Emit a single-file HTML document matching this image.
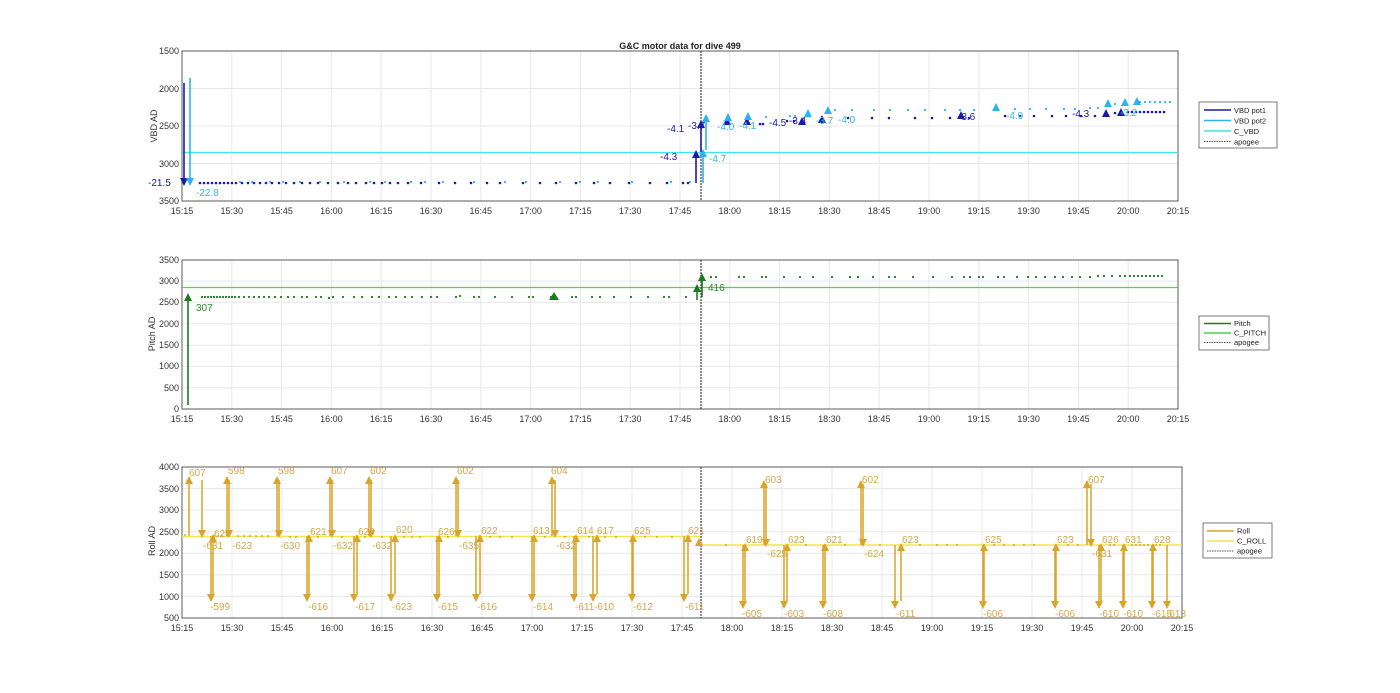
<!DOCTYPE html>
<html><head><meta charset="utf-8"><style>
html,body{margin:0;padding:0;background:#fff;}
svg{display:block;font-family:"Liberation Sans",Arial,sans-serif;}
.t{font-size:9px;fill:#333;}
.g{stroke:#e8e8e8;stroke-width:1;fill:none;}
.b{stroke:#333;stroke-width:0.8;fill:none;}
.rl{font-size:10px;fill:#d4a848;}
</style></head><body>
<svg width="1400" height="693" viewBox="0 0 1400 693">
<text x="680" y="49" text-anchor="middle" style="font-size:9px;font-weight:bold;fill:#222">G&amp;C motor data for dive 499</text>

<!-- ============ VBD AXES ============ -->
<path class="g" d="M231.8 51V201M281.6 51V201M331.4 51V201M381.2 51V201M431 51V201M480.8 51V201M530.6 51V201M580.4 51V201M630.2 51V201M680 51V201M729.8 51V201M779.6 51V201M829.4 51V201M879.2 51V201M929 51V201M978.8 51V201M1028.6 51V201M1078.4 51V201M1128.2 51V201M182 88.5H1178M182 126H1178M182 163.5H1178"/>
<rect class="b" x="182" y="51" width="996" height="150"/>
<g class="t" text-anchor="end"><text x="179" y="54">1500</text><text x="179" y="92">2000</text><text x="179" y="129">2500</text><text x="179" y="167">3000</text><text x="179" y="204">3500</text></g>
<text class="t" transform="translate(157,126) rotate(-90)" text-anchor="middle">VBD AD</text>
<g class="t" text-anchor="middle"><text x="182" y="214">15:15</text><text x="231.8" y="214">15:30</text><text x="281.6" y="214">15:45</text><text x="331.4" y="214">16:00</text><text x="381.2" y="214">16:15</text><text x="431" y="214">16:30</text><text x="480.8" y="214">16:45</text><text x="530.6" y="214">17:00</text><text x="580.4" y="214">17:15</text><text x="630.2" y="214">17:30</text><text x="680" y="214">17:45</text><text x="729.8" y="214">18:00</text><text x="779.6" y="214">18:15</text><text x="829.4" y="214">18:30</text><text x="879.2" y="214">18:45</text><text x="929" y="214">19:00</text><text x="978.8" y="214">19:15</text><text x="1028.6" y="214">19:30</text><text x="1078.4" y="214">19:45</text><text x="1128.2" y="214">20:00</text><text x="1178" y="214">20:15</text></g>
<line x1="182" y1="152.5" x2="1178" y2="152.5" stroke="#3fe3e8" stroke-width="1.2"/>
<line x1="701" y1="51" x2="701" y2="201" stroke="#444" stroke-width="1.2" stroke-dasharray="2,1"/>
<!-- dots -->
<path stroke="#1a1aa8" stroke-width="2.6" stroke-linecap="round" d="M200 183h0M204 183h0M208 183h0M212 183h0M216 183h0M220 183h0M224 183h0M228 183h0M232 183h0M236 183h0M242 183h0M248 183h0M254 183h0M260 183h0M266 183h0M272 183h0M279 183h0M286 183h0M294 183h0M302 183h0M310 183h0M318 183h0M328 183h0M338 183h0M348 183h0M356 183h0M366 183h0M374 183h0M382 183h0M390 183h0M398 183h0M408 183h0M421 183h0M439 183h0M455 183h0M471 183h0M487 183h0M500 183h0M523 183h0M540 183h0M556 183h0M576 183h0M594 183h0M610 183h0M629 183h0M650 183h0M667 183h0M683 183h0M688 183h0M760 124h0M763 124h0M787 121h0M794 121h0M848 118h0M872 118h0M889 118h0M915 118h0M932 118h0M950 118h0M969 118h0M1005 116h0M1020 116h0M1034 116h0M1052 116h0M1066 116h0M1081 116h0M1095 116h0M1115 113h0M1128 112h0M1132 112h0M1136 112h0M1140 112h0M1144 112h0M1148 112h0M1152 112h0M1156 112h0M1160 112h0M1164 112h0"/>
<path stroke="#2fb0f0" stroke-width="2.2" stroke-linecap="round" d="M240 182h0M252 182h0M270 182h0M283 182h0M300 182h0M320 182h0M344 182h0M370 182h0M385 182h0M411 182h0M425 182h0M443 182h0M474 182h0M505 182h0M526 182h0M560 182h0M580 182h0M598 182h0M632 182h0M671 182h0M690 182h0M766 117h0M790 116h0M795 116h0M835 110h0M852 110h0M874 110h0M890 110h0M908 110h0M925 110h0M945 110h0M960 110h0M974 110h0M1015 109h0M1030 109h0M1046 109h0M1064 109h0M1075 109h0M1090 108h0M1098 108h0M1115 104h0M1140 102h0M1145 102h0M1150 102h0M1155 102h0M1160 102h0M1165 102h0M1170 102h0"/>
<!-- VBD arrows dark -->
<g stroke="#1a1aa8" stroke-width="1.6" fill="#1a1aa8">
<line x1="184" y1="83" x2="184" y2="180"/><polygon stroke="none" points="180,178 188,178 184,186"/>
<line x1="696" y1="183" x2="696" y2="156"/><polygon stroke="none" points="692,158 700,158 696,150"/>
<line x1="701" y1="152" x2="701" y2="126"/><polygon stroke="none" points="697,128 705,128 701,120"/>
<polygon stroke="none" points="723,125 731,125 727,117"/><polygon stroke="none" points="743,125 751,125 747,117"/>
<polygon stroke="none" points="798,125 806,125 802,117"/><polygon stroke="none" points="818,123 826,123 822,115"/>
<polygon stroke="none" points="957,119 965,119 961,111"/><polygon stroke="none" points="1102,117 1110,117 1106,109"/>
<polygon stroke="none" points="1117,116 1125,116 1121,108"/>
</g>
<g stroke="#2fb0f0" stroke-width="1.6" fill="#2fb0f0">
<line x1="190" y1="78" x2="190" y2="180"/><polygon stroke="none" points="186,178 194,178 190,186"/>
<line x1="703" y1="183" x2="703" y2="155"/><polygon stroke="none" points="699,157 707,157 703,149"/>
<line x1="706" y1="150" x2="706" y2="120"/><polygon stroke="none" points="702,122 710,122 706,114"/>
<polygon stroke="none" points="724,121 732,121 728,113"/><polygon stroke="none" points="744,120 752,120 748,112"/>
<polygon stroke="none" points="804,117 812,117 808,109"/><polygon stroke="none" points="824,114 832,114 828,106"/>
<polygon stroke="none" points="992,111 1000,111 996,103"/><polygon stroke="none" points="1104,107 1112,107 1108,99"/>
<polygon stroke="none" points="1121,106 1129,106 1125,98"/><polygon stroke="none" points="1133,105 1141,105 1137,97"/>
</g>
<g style="font-size:10px;fill:#1a1aa8"><text x="148" y="186">-21.5</text><text x="660" y="160">-4.3</text><text x="667" y="132">-4.1</text><text x="688" y="129">-3.7</text><text x="769" y="126">-4.5</text><text x="789" y="124">-3.4</text><text x="958" y="120">-3.6</text><text x="1072" y="117">-4.3</text></g>
<g style="font-size:10px;fill:#35b5f0"><text x="196" y="196">-22.8</text><text x="709" y="162">-4.7</text><text x="717" y="130">-4.0</text><text x="739" y="129">-4.1</text><text x="816" y="124">-3.7</text><text x="838" y="123">-4.0</text><text x="1006" y="119">-4.9</text><text x="1120" y="116">-3.2</text></g>
<!-- legend 1 -->
<rect x="1199" y="102" width="78" height="46" fill="#fff" stroke="#444" stroke-width="0.7"/>
<g stroke-width="1.5"><line x1="1204" y1="110" x2="1231" y2="110" stroke="#1a1aa8"/><line x1="1204" y1="120.5" x2="1231" y2="120.5" stroke="#2fb0f0"/><line x1="1204" y1="131" x2="1231" y2="131" stroke="#3fe3e8"/><line x1="1204" y1="141.5" x2="1231" y2="141.5" stroke="#555" stroke-width="1" stroke-dasharray="1.5,1"/></g>
<g style="font-size:7.5px;fill:#222"><text x="1234" y="113">VBD pot1</text><text x="1234" y="123.5">VBD pot2</text><text x="1234" y="134">C_VBD</text><text x="1234" y="144.5">apogee</text></g>

<!-- ============ PITCH AXES ============ -->
<path class="g" d="M231.8 260V409M281.6 260V409M331.4 260V409M381.2 260V409M431 260V409M480.8 260V409M530.6 260V409M580.4 260V409M630.2 260V409M680 260V409M729.8 260V409M779.6 260V409M829.4 260V409M879.2 260V409M929 260V409M978.8 260V409M1028.6 260V409M1078.4 260V409M1128.2 260V409M182 387.7H1178M182 366.4H1178M182 345.1H1178M182 323.7H1178M182 302.4H1178M182 281.1H1178"/>
<rect class="b" x="182" y="260" width="996" height="149"/>
<g class="t" text-anchor="end"><text x="179" y="263">3500</text><text x="179" y="284">3000</text><text x="179" y="305">2500</text><text x="179" y="327">2000</text><text x="179" y="348">1500</text><text x="179" y="369">1000</text><text x="179" y="391">500</text><text x="179" y="412">0</text></g>
<text class="t" transform="translate(155,334) rotate(-90)" text-anchor="middle">Pitch AD</text>
<g class="t" text-anchor="middle"><text x="182" y="422">15:15</text><text x="231.8" y="422">15:30</text><text x="281.6" y="422">15:45</text><text x="331.4" y="422">16:00</text><text x="381.2" y="422">16:15</text><text x="431" y="422">16:30</text><text x="480.8" y="422">16:45</text><text x="530.6" y="422">17:00</text><text x="580.4" y="422">17:15</text><text x="630.2" y="422">17:30</text><text x="680" y="422">17:45</text><text x="729.8" y="422">18:00</text><text x="779.6" y="422">18:15</text><text x="829.4" y="422">18:30</text><text x="879.2" y="422">18:45</text><text x="929" y="422">19:00</text><text x="978.8" y="422">19:15</text><text x="1028.6" y="422">19:30</text><text x="1078.4" y="422">19:45</text><text x="1128.2" y="422">20:00</text><text x="1178" y="422">20:15</text></g>
<line x1="182" y1="287.5" x2="1178" y2="287.5" stroke="#4cd44c" stroke-width="1.3"/>
<line x1="701" y1="260" x2="701" y2="409" stroke="#444" stroke-width="1.2" stroke-dasharray="2,1"/>
<path stroke="#1e7a1e" stroke-width="2.2" stroke-linecap="round" d="M202 297h0M205 297h0M208 297h0M211 297h0M214 297h0M217 297h0M220 297h0M223 297h0M226 297h0M229 297h0M232 297h0M235 297h0M239 297h0M244 297h0M249 297h0M254 297h0M259 297h0M264 297h0M269 297h0M275 297h0M281 297h0M288 297h0M294 297h0M302 297h0M307 297h0M316 297h0M321 297h0M329 298h0M333 297h0M343 297h0M354 297h0M362 297h0M372 297h0M379 297h0M389 297h0M396 297h0M405 297h0M412 297h0M422 297h0M431 297h0M437 297h0M456 297h0M460 296h0M474 297h0M479 297h0M495 297h0M512 297h0M529 297h0M533 297h0M551 297h0M572 297h0M576 297h0M592 297h0M600 297h0M614 297h0M631 297h0M648 297h0M664 297h0M669 297h0M686 297h0M711 277h0M716 277h0M739 277h0M744 277h0M762 277h0M766 277h0M784 277h0M800 277h0M813 277h0M832 277h0M850 277h0M858 277h0M873 277h0M889 277h0M895 277h0M913 277h0M933 277h0M952 277h0M964 277h0M970 277h0M979 277h0M983 277h0M998 277h0M1004 277h0M1017 277h0M1028 277h0M1036 277h0M1045 277h0M1055 277h0M1063 277h0M1072 277h0M1080 277h0M1090 277h0M1098 276h0M1104 276h0M1112 276h0M1120 276h0M1125 276h0M1130 276h0M1134 276h0M1138 276h0M1142 276h0M1146 276h0M1150 276h0M1154 276h0M1158 276h0M1162 276h0"/>
<g stroke="#1e7a1e" stroke-width="1.6" fill="#1e7a1e">
<line x1="188" y1="405" x2="188" y2="300"/><polygon stroke="none" points="184,301 192,301 188,293"/>
<polygon stroke="none" points="549,300 559,300 554,292"/>
<line x1="697" y1="300" x2="697" y2="291"/><polygon stroke="none" points="693,292 701,292 697,284"/>
<line x1="702" y1="297" x2="702" y2="280"/><polygon stroke="none" points="698,281 706,281 702,273"/>
</g>
<g style="font-size:10px;fill:#2a8a2a"><text x="196" y="311">307</text><text x="708" y="291">416</text></g>
<rect x="1199" y="316" width="70" height="34" fill="#fff" stroke="#444" stroke-width="0.7"/>
<g stroke-width="1.5"><line x1="1204" y1="323.5" x2="1231" y2="323.5" stroke="#1e7a1e"/><line x1="1204" y1="333" x2="1231" y2="333" stroke="#4cd44c"/><line x1="1204" y1="342.5" x2="1231" y2="342.5" stroke="#555" stroke-width="1" stroke-dasharray="1.5,1"/></g>
<g style="font-size:7.5px;fill:#222"><text x="1234" y="326">Pitch</text><text x="1234" y="335.5">C_PITCH</text><text x="1234" y="345">apogee</text></g>

<!-- ============ ROLL AXES ============ -->
<path class="g" d="M232 467V618M282 467V618M332 467V618M382 467V618M432 467V618M482 467V618M532 467V618M582 467V618M632 467V618M682 467V618M732 467V618M782 467V618M832 467V618M882 467V618M932 467V618M982 467V618M1032 467V618M1082 467V618M1132 467V618M182 596.4H1182M182 574.9H1182M182 553.3H1182M182 531.7H1182M182 510.1H1182M182 488.6H1182"/>
<rect class="b" x="182" y="467" width="1000" height="151"/>
<g class="t" text-anchor="end"><text x="179" y="470">4000</text><text x="179" y="492">3500</text><text x="179" y="513">3000</text><text x="179" y="535">2500</text><text x="179" y="556">2000</text><text x="179" y="578">1500</text><text x="179" y="600">1000</text><text x="179" y="621">500</text></g>
<text class="t" transform="translate(155,541) rotate(-90)" text-anchor="middle">Roll AD</text>
<g class="t" text-anchor="middle"><text x="182" y="631">15:15</text><text x="232" y="631">15:30</text><text x="282" y="631">15:45</text><text x="332" y="631">16:00</text><text x="382" y="631">16:15</text><text x="432" y="631">16:30</text><text x="482" y="631">16:45</text><text x="532" y="631">17:00</text><text x="582" y="631">17:15</text><text x="632" y="631">17:30</text><text x="682" y="631">17:45</text><text x="732" y="631">18:00</text><text x="782" y="631">18:15</text><text x="832" y="631">18:30</text><text x="882" y="631">18:45</text><text x="932" y="631">19:00</text><text x="982" y="631">19:15</text><text x="1032" y="631">19:30</text><text x="1082" y="631">19:45</text><text x="1132" y="631">20:00</text><text x="1182" y="631">20:15</text></g>
<line x1="182" y1="536.5" x2="701" y2="536.5" stroke="#f2e64a" stroke-width="1.4"/>
<line x1="701" y1="545" x2="1182" y2="545" stroke="#f2e64a" stroke-width="1.4"/>
<line x1="701" y1="467" x2="701" y2="618" stroke="#444" stroke-width="1.2" stroke-dasharray="2,1"/>
<path stroke="#b89a30" stroke-width="1.8" stroke-linecap="round" d="M185 535h0M214 536h0M218 536h0M222 536h0M238 536h0M244 536h0M250 536h0M256 536h0M262 536h0M268 536h0M290 537h0M296 537h0M318 537h0M342 537h0M365 537h0M382 537h0M404 537h0M412 537h0M420 537h0M448 537h0M490 537h0M500 537h0M512 537h0M545 537h0M565 537h0M589 537h0M605 537h0M616 537h0M645 537h0M657 537h0M672 537h0M726 545h0M806 545h0M845 545h0M880 545h0M920 545h0M937 545h0M947 545h0M957 545h0M994 545h0M1004 545h0M1014 545h0M1024 545h0M1034 545h0M1068 545h0M1078 545h0M1110 545h0M1114 545h0M1132 545h0M1136 545h0M1140 545h0M1144 545h0M1148 545h0M1156 545h0M1160 545h0"/>
<!-- roll arrows -->
<g stroke="#d9a428" stroke-width="1.5" fill="#d9a428">
<!-- pre apogee: ups to 480, downs to 600 -->
<path fill="none" d="M189 536V484M202 480V530M211 536V594M213 594V540M227 536V484M229 480V530M277 536V484M279 480V530M307 536V594M309 594V542M330 536V484M332 480V530M354 536V594M357 594V542M369 536V484M371 480V530M391 536V594M395 594V542M437 536V594M439 594V542M456 536V484M458 480V530M476 536V594M480 594V542M532 536V594M534 594V542M552 536V484M555 480V530M574 536V594M576 594V542M593 536V594M597 594V542M632 536V594M633 594V542M684 536V594M688 594V542M699 545V541"/>
<path stroke="none" d="M185 484h8l-4-8zM198 530h8l-4 8zM207 594h8l-4 8zM209 542h8l-4-8zM223 484h8l-4-8zM225 530h8l-4 8zM273 484h8l-4-8zM275 530h8l-4 8zM303 594h8l-4 8zM305 542h8l-4-8zM326 484h8l-4-8zM328 530h8l-4 8zM350 594h8l-4 8zM353 542h8l-4-8zM365 484h8l-4-8zM367 530h8l-4 8zM387 594h8l-4 8zM391 542h8l-4-8zM433 594h8l-4 8zM435 542h8l-4-8zM452 484h8l-4-8zM454 530h8l-4 8zM472 594h8l-4 8zM476 542h8l-4-8zM528 594h8l-4 8zM530 542h8l-4-8zM548 484h8l-4-8zM551 530h8l-4 8zM570 594h8l-4 8zM572 542h8l-4-8zM589 594h8l-4 8zM593 542h8l-4-8zM628 594h8l-4 8zM629 542h8l-4-8zM680 594h8l-4 8zM684 542h8l-4-8zM695 546h8l-4-8z"/>
<!-- post apogee: base 545 -->
<path fill="none" d="M743 545V601M745 601V551M764 545V488M766 484V539M784 545V601M787 601V551M823 545V601M825 601V551M861 545V488M863 484V539M895 545V601M901 601V551M983 545V601M984 601V551M1055 545V601M1056 601V551M1087 545V488M1091 484V539M1099 545V601M1101 601V551M1123 545V601M1124 601V551M1152 545V601M1153 601V551M1167 545V601"/>
<path stroke="none" d="M739 601h8l-4 8zM741 551h8l-4-8zM760 488h8l-4-8zM762 539h8l-4 8zM780 601h8l-4 8zM783 551h8l-4-8zM819 601h8l-4 8zM821 551h8l-4-8zM857 488h8l-4-8zM859 539h8l-4 8zM891 601h8l-4 8zM897 551h8l-4-8zM979 601h8l-4 8zM980 551h8l-4-8zM1051 601h8l-4 8zM1052 551h8l-4-8zM1083 488h8l-4-8zM1087 539h8l-4 8zM1095 601h8l-4 8zM1097 551h8l-4-8zM1119 601h8l-4 8zM1120 551h8l-4-8zM1148 601h8l-4 8zM1149 551h8l-4-8zM1163 601h8l-4 8z"/>
</g>
<g class="rl">
<text x="189" y="476">607</text><text x="203" y="549">-631</text><text x="210" y="610">-599</text><text x="214" y="537">620</text><text x="228" y="474">598</text><text x="232" y="549">-623</text><text x="278" y="474">598</text><text x="280" y="549">-630</text><text x="308" y="610">-616</text><text x="310" y="535">621</text><text x="331" y="474">607</text><text x="333" y="549">-632</text><text x="355" y="610">-617</text><text x="358" y="535">628</text><text x="370" y="474">602</text><text x="372" y="549">-632</text><text x="392" y="610">-623</text><text x="396" y="533">620</text><text x="438" y="610">-615</text><text x="438" y="535">626</text><text x="457" y="474">602</text><text x="459" y="549">-635</text><text x="477" y="610">-616</text><text x="481" y="534">622</text><text x="533" y="610">-614</text><text x="533" y="534">613</text><text x="551" y="474">604</text><text x="556" y="549">-632</text><text x="575" y="610">-611</text><text x="577" y="534">614</text><text x="594" y="610">-610</text><text x="597" y="534">617</text><text x="633" y="610">-612</text><text x="634" y="534">625</text><text x="685" y="610">-611</text><text x="688" y="534">621</text>
<text x="742" y="617">-605</text><text x="746" y="543">619</text><text x="765" y="483">603</text><text x="767" y="557">-625</text><text x="784" y="617">-603</text><text x="788" y="543">623</text><text x="823" y="617">-608</text><text x="826" y="543">621</text><text x="862" y="483">602</text><text x="864" y="557">-624</text><text x="896" y="617">-611</text><text x="902" y="543">623</text><text x="983" y="617">-606</text><text x="985" y="543">625</text><text x="1055" y="617">-606</text><text x="1057" y="543">623</text><text x="1088" y="483">607</text><text x="1092" y="557">-631</text><text x="1099" y="617">-610</text><text x="1102" y="543">626</text><text x="1123" y="617">-610</text><text x="1125" y="543">631</text><text x="1152" y="617">-615</text><text x="1154" y="543">628</text><text x="1166" y="617">-613</text>
</g>
<rect x="1203" y="523" width="69" height="35" fill="#fff" stroke="#444" stroke-width="0.7"/>
<g stroke-width="1.5"><line x1="1207" y1="531" x2="1234" y2="531" stroke="#d9a428"/><line x1="1207" y1="541" x2="1234" y2="541" stroke="#f2e64a"/><line x1="1207" y1="551" x2="1234" y2="551" stroke="#555" stroke-width="1" stroke-dasharray="1.5,1"/></g>
<g style="font-size:7.5px;fill:#222"><text x="1237" y="533.5">Roll</text><text x="1237" y="543.5">C_ROLL</text><text x="1237" y="553.5">apogee</text></g>
</svg>
</body></html>
